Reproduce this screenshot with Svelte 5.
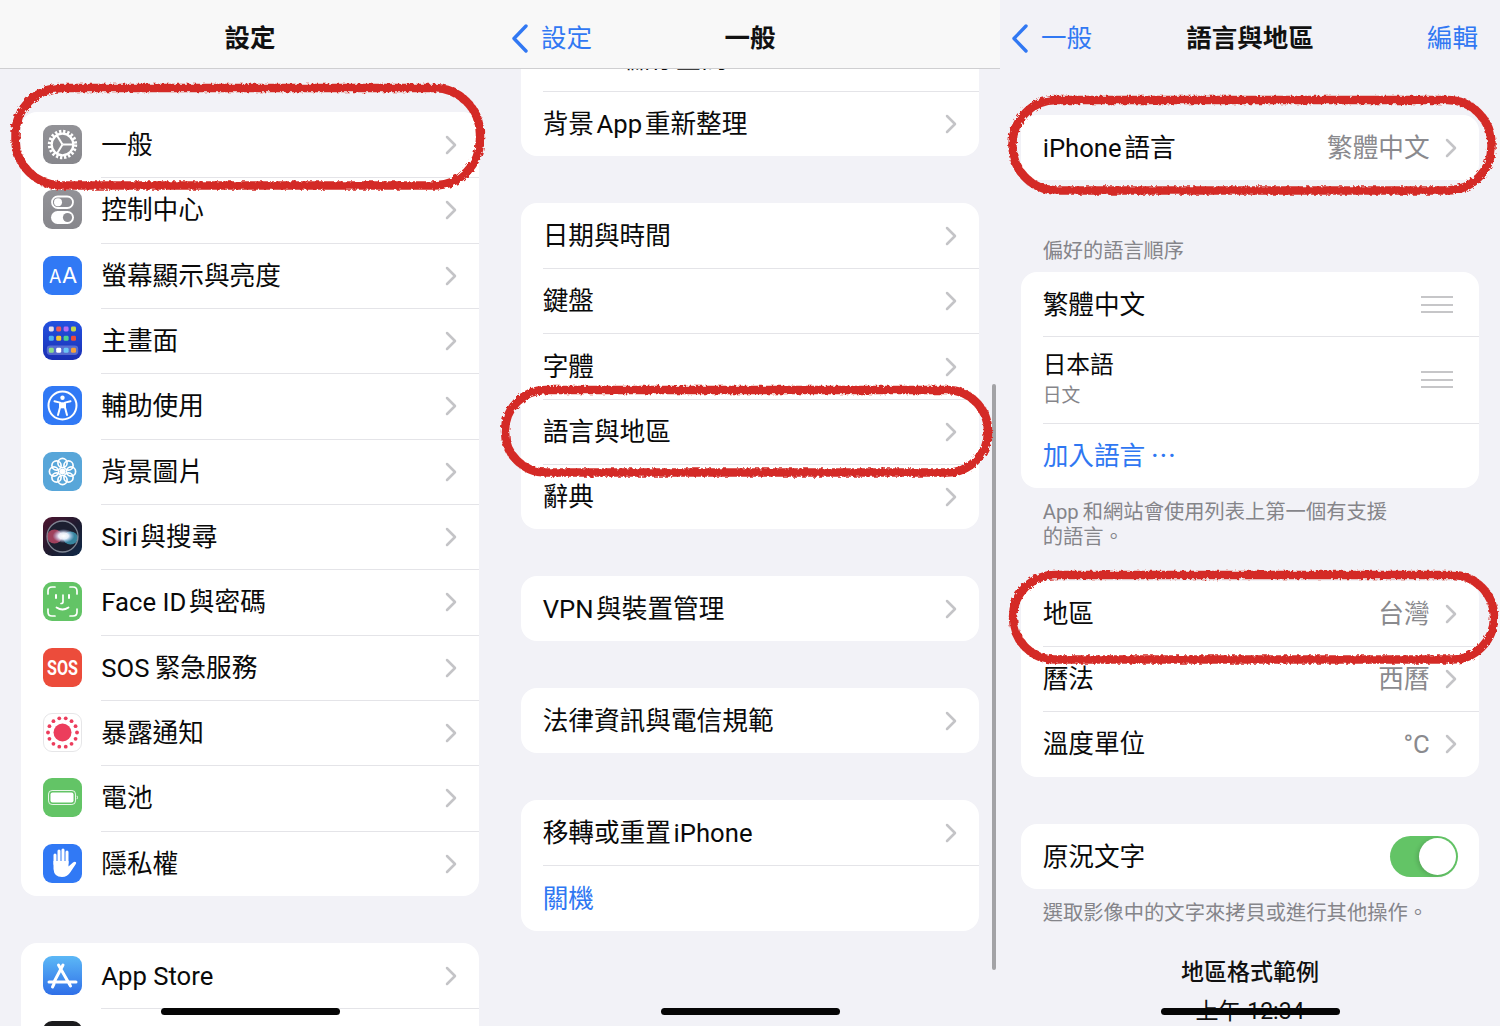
<script lang="ts">
  const settingsGroups = [
    [
      { icon: 'gear', label: '一般' },
      { icon: 'control', label: '控制中心' },
      { icon: 'display', label: '螢幕顯示與亮度' },
      { icon: 'home', label: '主畫面' },
      { icon: 'access', label: '輔助使用' },
      { icon: 'wallpaper', label: '背景圖片' },
      { icon: 'siri', label: 'Siri\u200a與搜尋' },
      { icon: 'face', label: 'Face ID\u200a與密碼' },
      { icon: 'sos', label: 'SOS\u2009緊急服務' },
      { icon: 'exposure', label: '暴露通知' },
      { icon: 'battery', label: '電池' },
      { icon: 'privacy', label: '隱私權' }
    ],
    [
      { icon: 'appstore', label: 'App Store' },
      { icon: 'wallet', label: '' }
    ]
  ];

  const generalGroups = [
    ['iPhone\u200a儲存空間', '背景\u200aApp\u200a重新整理'],
    ['日期與時間', '鍵盤', '字體', '語言與地區', '辭典'],
    ['VPN\u200a與裝置管理'],
    ['法律資訊與電信規範']
  ];

  const regionRows = [
    { label: '地區', value: '台灣' },
    { label: '曆法', value: '西曆' },
    { label: '溫度單位', value: '°C' }
  ];

  const exposureDots = Array.from({ length: 14 }, (_, i) => {
    const a = (i / 14) * Math.PI * 2;
    return { x: 19.5 + Math.cos(a) * 14.5, y: 19.5 + Math.sin(a) * 14.5 };
  });
  const petals = Array.from({ length: 8 }, (_, i) => {
    const a = (i / 8) * Math.PI * 2;
    return { x: 19.5 + Math.cos(a) * 8.5, y: 19.5 + Math.sin(a) * 8.5 };
  });
  const homeColors = ['#e6e0e8', '#ef5a55', '#b76df0', '#c5d84a', '#4fb2f2', '#f6c531', '#4fd08e', '#ee4b3c'];
  const dockColors = ['#8bdc8c', '#ffffff', '#6cc4f4', '#f5a13a'];
</script>

{#snippet chevron()}
  <svg class="chevron" width="12" height="20" viewBox="0 0 12 20">
    <polyline points="2,2 10,10 2,18" fill="none" stroke="#c4c4c7" stroke-width="2.5" stroke-linecap="round" stroke-linejoin="round" />
  </svg>
{/snippet}

{#snippet back(label)}
  <div class="back">
    <svg width="18" height="29" viewBox="0 0 18 29">
      <polyline points="15,2 3,14.5 15,27" fill="none" stroke="#3178f3" stroke-width="3.4" stroke-linecap="round" stroke-linejoin="round" />
    </svg>
    <span>{label}</span>
  </div>
{/snippet}

{#snippet handle()}
  <div class="handle"><i></i><i></i><i></i></div>
{/snippet}

{#snippet icon(name)}
  <svg class="icon" width="39" height="39" viewBox="0 0 39 39">
    <defs>
      <linearGradient id="grayBg" x1="0" y1="0" x2="0" y2="1"><stop offset="0" stop-color="#929297" /><stop offset="1" stop-color="#87878c" /></linearGradient>
      <linearGradient id="homeBg" x1="0" y1="0" x2="0" y2="1"><stop offset="0" stop-color="#2352e0" /><stop offset="1" stop-color="#1a2fb4" /></linearGradient>
      <linearGradient id="storeBg" x1="0" y1="0" x2="0" y2="1"><stop offset="0" stop-color="#5cb8f6" /><stop offset="1" stop-color="#2f6fe8" /></linearGradient>
      <linearGradient id="siriBg" x1="0" y1="0" x2="1" y2="1"><stop offset="0" stop-color="#4f1430" /><stop offset="0.55" stop-color="#1d1c30" /><stop offset="1" stop-color="#0f2a4a" /></linearGradient>
      <radialGradient id="siriCore" cx="0.5" cy="0.5" r="0.5"><stop offset="0" stop-color="#ffffff" /><stop offset="0.45" stop-color="#f0f4ff" stop-opacity="0.95" /><stop offset="1" stop-color="#b8c8ff" stop-opacity="0" /></radialGradient>
    </defs>
    {#if name === 'gear'}
      <rect width="39" height="39" rx="9" fill="url(#grayBg)" />
      <circle cx="19.5" cy="19.5" r="13" fill="none" stroke="#fff" stroke-width="3.4" stroke-dasharray="2.3 1.8" />
      <circle cx="19.5" cy="19.5" r="10.8" fill="none" stroke="#fff" stroke-width="2.2" />
      <g stroke="#fff" stroke-width="2">
        <line x1="19.5" y1="19.5" x2="30" y2="19.5" />
        <line x1="19.5" y1="19.5" x2="14" y2="10.5" />
        <line x1="19.5" y1="19.5" x2="14" y2="28.5" />
      </g>
    {:else if name === 'control'}
      <rect width="39" height="39" rx="9" fill="url(#grayBg)" />
      <rect x="9" y="6.5" width="21" height="11.5" rx="5.75" fill="none" stroke="#fff" stroke-width="1.8" />
      <circle cx="15" cy="12.2" r="4" fill="#fff" />
      <rect x="8" y="21" width="23" height="13" rx="6.5" fill="#fff" />
      <circle cx="24.5" cy="27.5" r="4.6" fill="#8d8d92" />
    {:else if name === 'display'}
      <rect width="39" height="39" rx="9" fill="#3179f5" />
      <text x="6" y="27" class="aa small">A</text>
      <text x="19" y="27" class="aa">A</text>
    {:else if name === 'home'}
      <rect width="39" height="39" rx="9" fill="url(#homeBg)" />
      {#each homeColors as color, i}
        <rect x={5.8 + (i % 4) * 7.4} y={i < 4 ? 5.5 : 14.8} width="5" height="5" rx="1.4" fill={color} />
      {/each}
      <rect x="3.8" y="24.5" width="31.4" height="9.5" rx="3.4" fill="#fff" fill-opacity="0.26" />
      {#each dockColors as color, i}
        <rect x={5.8 + i * 7.4} y="26.8" width="5" height="5" rx="1.4" fill={color} />
      {/each}
    {:else if name === 'access'}
      <rect width="39" height="39" rx="9" fill="#3179f5" />
      <circle cx="19.5" cy="19.5" r="14" fill="none" stroke="#fff" stroke-width="2" />
      <circle cx="19.5" cy="11.7" r="2.2" fill="#fff" />
      <path d="M11.5 15.3 L17 16.6 L17 21.5 L15 29 M27.5 15.3 L22 16.6 L22 21.5 L24 29" fill="none" stroke="#fff" stroke-width="2" stroke-linecap="round" stroke-linejoin="round" />
      <rect x="17" y="16.3" width="5" height="6" fill="#fff" />
    {:else if name === 'wallpaper'}
      <rect width="39" height="39" rx="9" fill="#58a6d9" />
      {#each petals as p}
        <circle cx={p.x} cy={p.y} r="4.6" fill="none" stroke="#fff" stroke-width="1.7" />
      {/each}
      <circle cx="19.5" cy="19.5" r="3" fill="#fff" />
    {:else if name === 'siri'}
      <rect width="39" height="39" rx="9" fill="url(#siriBg)" />
      <circle cx="19.5" cy="19.5" r="15.5" fill="#1c1f30" />
      <ellipse cx="11.5" cy="19.5" rx="7.5" ry="7" fill="#c04868" fill-opacity="0.8" />
      <ellipse cx="27.5" cy="21" rx="7.5" ry="6.5" fill="#3f9fbc" fill-opacity="0.8" />
      <ellipse cx="20.5" cy="19" rx="11" ry="7" fill="url(#siriCore)" />
      <circle cx="19.5" cy="19.5" r="15.5" fill="none" stroke="#8f98a4" stroke-opacity="0.85" stroke-width="1.3" />
    {:else if name === 'face'}
      <rect width="39" height="39" rx="9" fill="#63c466" />
      <path d="M5 12 V9 Q5 5 9 5 H12 M27 5 H30 Q34 5 34 9 V12 M34 27 V30 Q34 34 30 34 H27 M12 34 H9 Q5 34 5 30 V27" fill="none" stroke="#fff" stroke-width="1.7" stroke-linecap="round" />
      <path d="M13 13 V16 M26 13 V16" stroke="#fff" stroke-width="2" stroke-linecap="round" />
      <path d="M20 13 V20 Q20 21.5 18 21.5" fill="none" stroke="#fff" stroke-width="1.7" stroke-linecap="round" />
      <path d="M13.5 25.5 Q19.5 29.5 25.5 25.5" fill="none" stroke="#fff" stroke-width="1.8" stroke-linecap="round" />
    {:else if name === 'sos'}
      <rect width="39" height="39" rx="9" fill="#ec4c3b" />
      <text x="19.5" y="26.5" text-anchor="middle" textLength="31" lengthAdjust="spacingAndGlyphs" class="sos">SOS</text>
    {:else if name === 'exposure'}
      <rect x="0.5" y="0.5" width="38" height="38" rx="8.5" fill="#fff" stroke="#e6e6e8" />
      <circle cx="19.5" cy="19.5" r="9" fill="#ec3d5c" />
      {#each exposureDots as d}
        <circle cx={d.x} cy={d.y} r="1.9" fill="#ec3d5c" />
      {/each}
    {:else if name === 'battery'}
      <rect width="39" height="39" rx="9" fill="#63c466" />
      <rect x="5.5" y="12.5" width="27" height="14" rx="3.6" fill="none" stroke="#fff" stroke-opacity="0.85" stroke-width="1" />
      <rect x="7.5" y="14.5" width="23" height="10" rx="2" fill="#fff" />
      <path d="M34 17.8 Q35 19.5 34 21.2" fill="none" stroke="#fff" stroke-opacity="0.85" stroke-width="1" />
    {:else if name === 'privacy'}
      <rect width="39" height="39" rx="9" fill="#3179f5" />
      <path d="M12 20 V11 M16 19 V7 M20 19 V6 M24 19 V8" stroke="#fff" stroke-width="3" stroke-linecap="round" />
      <path d="M10.5 17 H25.5 V22.5 L30 18.5 Q32 17 33 18.3 Q33.5 19.3 32.5 20.5 L27.5 28 Q24.5 33 19 33 Q11 33 10.5 25 Z" fill="#fff" />
    {:else if name === 'appstore'}
      <rect width="39" height="39" rx="9" fill="url(#storeBg)" />
      <path d="M20 9 L11 26 M15.5 9 L27.5 30 M6 26 H33 M9.5 31 L11 28" fill="none" stroke="#fff" stroke-width="3" stroke-linecap="round" />
    {:else if name === 'wallet'}
      <rect width="39" height="39" rx="9" fill="#1c1c1e" />
    {/if}
  </svg>
{/snippet}

<div class="screens">
  <section class="panel">
    <header class="nav">
      <h1>設定</h1>
    </header>
    <div class="content first">
      {#each settingsGroups as group}
        <div class="card">
          {#each group as row}
            <div class="row">
              {@render icon(row.icon)}
              <div class="row-body with-icon">
                <span class="label">{row.label}</span>
                {@render chevron()}
              </div>
            </div>
          {/each}
        </div>
      {/each}
    </div>
    <div class="home-bar"></div>
  </section>

  <section class="panel">
    <header class="nav over">
      {@render back('設定')}
      <h1>一般</h1>
    </header>
    <div class="content general">
      {#each generalGroups as group}
        <div class="card">
          {#each group as label}
            <div class="row">
              <div class="row-body">
                <span class="label">{label}</span>
                {@render chevron()}
              </div>
            </div>
          {/each}
        </div>
      {/each}
      <div class="card">
        <div class="row">
          <div class="row-body">
            <span class="label">移轉或重置&#8202;iPhone</span>
            {@render chevron()}
          </div>
        </div>
        <div class="row">
          <div class="row-body">
            <span class="label blue">關機</span>
          </div>
        </div>
      </div>
    </div>
    <div class="scrollbar"></div>
    <div class="home-bar"></div>
  </section>

  <section class="panel">
    <header class="nav plain">
      {@render back('一般')}
      <h1>語言與地區</h1>
      <span class="edit">編輯</span>
    </header>
    <div class="content region">
      <div class="card">
        <div class="row">
          <div class="row-body">
            <span class="label">iPhone&#8202;語言</span>
            <span class="value">繁體中文</span>
            {@render chevron()}
          </div>
        </div>
      </div>

      <div class="group-title">偏好的語言順序</div>
      <div class="card">
        <div class="row lang-first">
          <div class="row-body">
            <span class="label">繁體中文</span>
            {@render handle()}
          </div>
        </div>
        <div class="row lang-second">
          <div class="row-body">
            <div class="stack">
              <span class="label">日本語</span>
              <span class="sub">日文</span>
            </div>
            {@render handle()}
          </div>
        </div>
        <div class="row">
          <div class="row-body">
            <span class="label blue">加入語言&#8201;⋯</span>
          </div>
        </div>
      </div>
      <p class="note">App&#8201;和網站會使用列表上第一個有支援<br />的語言。</p>

      <div class="card region-card">
        {#each regionRows as row}
          <div class="row">
            <div class="row-body">
              <span class="label">{row.label}</span>
              <span class="value">{row.value}</span>
              {@render chevron()}
            </div>
          </div>
        {/each}
      </div>

      <div class="card live-card">
        <div class="row">
          <div class="row-body">
            <span class="label">原況文字</span>
            <div class="toggle"><i></i></div>
          </div>
        </div>
      </div>
      <p class="note single">選取影像中的文字來拷貝或進行其他操作。</p>

      <div class="format">
        <strong>地區格式範例</strong>
        <span>上午 12:34</span>
      </div>
    </div>
    <div class="home-bar"></div>
  </section>

  <!-- red marker circles drawn over the screenshots -->
  <svg class="marks" width="1500" height="1026" viewBox="0 0 1500 1026">
    <defs>
      <filter id="rough" x="-5%" y="-20%" width="110%" height="140%">
        <feTurbulence type="fractalNoise" baseFrequency="0.3" numOctaves="3" seed="4" />
        <feDisplacementMap in="SourceGraphic" scale="4.5" />
      </filter>
    </defs>
    <g fill="none" stroke="#d42c27" stroke-width="8.5" filter="url(#rough)">
      <rect x="15.5" y="88" width="464.5" height="97.5" rx="46" />
      <rect x="505" y="390" width="483" height="82.5" rx="41" />
      <rect x="1012.5" y="100" width="479" height="90.5" rx="44" />
      <rect x="1013" y="575" width="481" height="84.5" rx="42" />
    </g>
  </svg>
</div>

<style>
  :global(body) {
    background: #f2f2f7;
    overflow: hidden;
  }

  .screens {
    position: relative;
    display: grid;
    grid-template-columns: repeat(3, 500px);
    width: 1500px;
    height: 1026px;
    overflow: hidden;
    font-family: Roboto, 'Noto Sans CJK TC', sans-serif;
    color: #000;
  }

  .panel {
    position: relative;
    height: 1026px;
    overflow: hidden;
    background: #f2f2f7;
  }

  .nav {
    position: relative;
    z-index: 2;
    display: flex;
    align-items: center;
    justify-content: center;
    height: 68px;
    background: #f8f8f8;
    border-bottom: 1px solid #cfcfd1;
  }

  .nav.plain {
    background: transparent;
    border-bottom-color: transparent;
  }

  .nav h1 {
    margin: 0;
    padding-top: 8px;
    font-size: 25.5px;
    font-weight: 700;
    line-height: 30px;
    color: #111;
  }

  .back {
    position: absolute;
    left: 11px;
    top: 24px;
    display: flex;
    align-items: center;
    gap: 12px;
    color: #3178f3;
    font-size: 25.5px;
    line-height: 29px;
  }

  .edit {
    position: absolute;
    right: 22px;
    top: 24px;
    color: #3178f3;
    font-size: 25.5px;
    line-height: 29px;
  }

  .content {
    display: flex;
    flex-direction: column;
    gap: 47px;
    padding: 0 21.33px;
  }

  .content.first {
    padding-top: 43px;
  }

  .content.general {
    margin-top: -43.6px;
    gap: 46.7px;
  }

  .content.region {
    gap: 0;
    padding-top: 46px;
  }

  .card {
    flex: none;
    background: #fff;
    border-radius: 16px;
    overflow: hidden;
  }

  .row {
    display: flex;
    align-items: center;
    height: 65.33px;
    padding-left: 21.33px;
    box-sizing: border-box;
  }

  .icon {
    flex: none;
    margin-right: 19.67px;
  }

  .row-body {
    flex: 1;
    min-width: 0;
    align-self: stretch;
    display: flex;
    align-items: center;
    padding-right: 22px;
    border-top: 1.3px solid #e4e4e8;
  }

  .row:first-child .row-body {
    border-top-color: transparent;
  }

  .label {
    flex: 1;
    font-size: 25.67px;
    line-height: 32px;
    white-space: nowrap;
    color: #0a0a0a;
  }

  .label.blue {
    color: #2f77f2;
  }

  .value {
    margin-right: 15px;
    font-size: 25.67px;
    line-height: 32px;
    color: #8a8a8e;
  }

  .chevron {
    flex: none;
  }

  .group-title {
    margin: 56px 0 0 21.33px;
    height: 36px;
    font-size: 20.2px;
    line-height: 30px;
    color: #85858a;
  }

  .lang-first {
    height: 63.4px;
  }

  .lang-second {
    height: 87px;
  }

  .stack {
    flex: 1;
    display: flex;
    flex-direction: column;
    gap: 1px;
  }

  .stack .label {
    margin-top: -1px;
    font-size: 23.7px;
  }

  .sub {
    font-size: 18.8px;
    line-height: 28px;
    color: #85858a;
  }

  .handle {
    display: flex;
    flex-direction: column;
    gap: 5.5px;
    margin-right: 4px;
  }

  .handle i {
    display: block;
    width: 32px;
    height: 2px;
    background: #c6c6c8;
  }

  .note {
    margin: 12px 21.33px 0;
    font-size: 20.3px;
    line-height: 24.5px;
    color: #85858a;
  }

  .note.single {
    margin-top: 12.5px;
  }

  .region-card {
    margin-top: 31.5px;
  }

  .live-card {
    margin-top: 47px;
  }

  .toggle {
    flex: none;
    position: relative;
    width: 68px;
    height: 41px;
    margin-right: -1px;
    border-radius: 21px;
    background: #63c466;
  }

  .toggle i {
    position: absolute;
    right: 2px;
    top: 2px;
    width: 37px;
    height: 37px;
    border-radius: 50%;
    background: #fff;
    box-shadow: -2px 1px 4px rgba(0, 0, 0, 0.14);
  }

  .format {
    display: flex;
    flex-direction: column;
    align-items: center;
    gap: 9.5px;
    margin-top: 32px;
    font-size: 23px;
    line-height: 30px;
    color: #111;
  }

  .format strong {
    font-weight: 500;
  }

  .scrollbar {
    position: absolute;
    z-index: 3;
    left: 492px;
    top: 384px;
    width: 4px;
    height: 586px;
    border-radius: 2px;
    background: #a3a3a6;
  }

  .home-bar {
    position: absolute;
    z-index: 3;
    left: 161px;
    top: 1008px;
    width: 179px;
    height: 7px;
    border-radius: 4px;
    background: #060606;
  }

  .aa {
    font-family: Inter, sans-serif;
    font-size: 22px;
    fill: #fff;
  }

  .aa.small {
    font-size: 18px;
  }

  .sos {
    font-family: Roboto, sans-serif;
    font-size: 20px;
    font-weight: 700;
    fill: #fff;
  }

  .marks {
    position: absolute;
    z-index: 5;
    left: 0;
    top: 0;
    pointer-events: none;
  }
</style>
